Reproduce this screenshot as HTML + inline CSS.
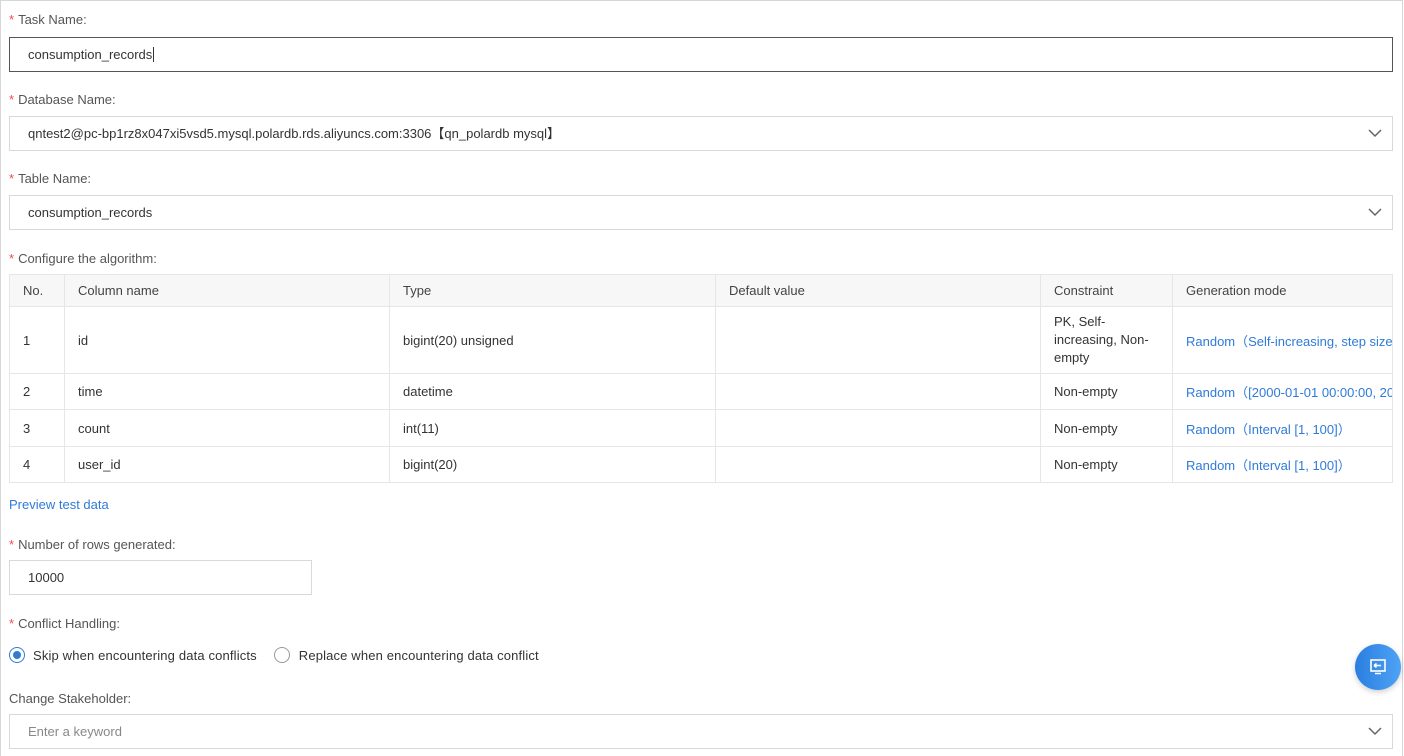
<!DOCTYPE html>
<html><head><style>
*{box-sizing:border-box;margin:0;padding:0}
body{width:1404px;height:756px;overflow:hidden;background:#fff;font-family:"Liberation Sans",Arial,sans-serif;font-size:13px;color:#333;position:relative}
.frame{position:absolute;left:0;top:0;width:1403px;height:756px;border:1px solid #d6d6d6;border-bottom:none}
.lbl{position:absolute;left:9px;color:#555;font-size:13px}
.lbl i{color:#f04c4c;font-style:normal;margin-right:4px}
.box{position:absolute;left:9px;width:1384px;height:35px;border:1px solid #d9d9d9;padding-left:18px;line-height:33px;color:#333}
.chev{position:absolute;right:10px;top:11px}
table{position:absolute;left:9px;top:274px;width:1384px;border-collapse:collapse;table-layout:fixed}
td,th{border:1px solid #e6e6e6;padding:0 13px;text-align:left;font-weight:normal;white-space:nowrap;overflow:hidden}
th{background:#f7f7f7;height:32px;color:#444}
td{color:#333}
.b{color:#2f7bd9}
</style></head><body>
<div class="frame"></div>
<div class="lbl" style="top:12px"><i>*</i>Task Name:</div>
<div class="box" style="top:37px;border-color:#555">consumption_records<span style="border-left:1px solid #333;margin-left:1px"></span></div>
<div class="lbl" style="top:92px"><i>*</i>Database Name:</div>
<div class="box" style="top:116px">qntest2@pc-bp1rz8x047xi5vsd5.mysql.polardb.rds.aliyuncs.com:3306【qn_polardb mysql】<svg class="chev" width="14" height="10" viewBox="0 0 14 10"><path d="M1 2l6 6 6-6" fill="none" stroke="#666" stroke-width="1.5"/></svg></div>
<div class="lbl" style="top:171px"><i>*</i>Table Name:</div>
<div class="box" style="top:195px">consumption_records<svg class="chev" width="14" height="10" viewBox="0 0 14 10"><path d="M1 2l6 6 6-6" fill="none" stroke="#666" stroke-width="1.5"/></svg></div>
<div class="lbl" style="top:251px"><i>*</i>Configure the algorithm:</div>
<table>
<colgroup><col style="width:55px"><col style="width:325px"><col style="width:326px"><col style="width:325px"><col style="width:132px"><col></colgroup>
<tr><th>No.</th><th>Column name</th><th>Type</th><th>Default value</th><th>Constraint</th><th>Generation mode</th></tr>
<tr style="height:67px"><td>1</td><td>id</td><td>bigint(20) unsigned</td><td></td><td style="white-space:normal;line-height:18px">PK, Self-increasing, Non-empty</td><td class="b">Random（Self-increasing, step size 1）</td></tr>
<tr style="height:36px"><td>2</td><td>time</td><td>datetime</td><td></td><td>Non-empty</td><td class="b">Random（[2000-01-01 00:00:00, 2020-01-01 00:00:00]）</td></tr>
<tr style="height:37px"><td>3</td><td>count</td><td>int(11)</td><td></td><td>Non-empty</td><td class="b">Random（Interval [1, 100]）</td></tr>
<tr style="height:36px"><td>4</td><td>user_id</td><td>bigint(20)</td><td></td><td>Non-empty</td><td class="b">Random（Interval [1, 100]）</td></tr>
</table>
<div class="b" style="position:absolute;left:9px;top:497px">Preview test data</div>
<div class="lbl" style="top:537px"><i>*</i>Number of rows generated:</div>
<div class="box" style="top:560px;width:303px">10000</div>
<div class="lbl" style="top:616px"><i>*</i>Conflict Handling:</div>
<div style="position:absolute;left:9px;top:647px;display:flex;align-items:center;color:#333;letter-spacing:0.15px">
<span style="width:16px;height:16px;border-radius:50%;border:1px solid #2f7bd9;display:inline-flex;align-items:center;justify-content:center;margin-right:8px"><span style="width:8px;height:8px;border-radius:50%;background:#2f7bd9"></span></span>Skip when encountering data conflicts
<span style="width:16px;height:16px;border-radius:50%;border:1px solid #999;display:inline-block;margin:0 9px 0 17px"></span>Replace when encountering data conflict</div>
<div class="lbl" style="top:691px">Change Stakeholder:</div>
<div class="box" style="top:714px;color:#888">Enter a keyword<svg class="chev" width="14" height="10" viewBox="0 0 14 10"><path d="M1 2l6 6 6-6" fill="none" stroke="#666" stroke-width="1.5"/></svg></div>
<div style="position:absolute;left:1355px;top:644px;width:46px;height:46px;border-radius:50%;background:linear-gradient(90deg,#2a7ee0,#4ea3f5);box-shadow:0 2px 6px rgba(0,0,0,.2)">
<svg width="46" height="46" viewBox="0 0 46 46"><rect x="16" y="16" width="14" height="11" fill="none" stroke="#fff" stroke-width="1.6"/><path d="M19 21.5h7M19 21.5l2.5-2M19 21.5l2.5 2M20 29.5h6" stroke="#fff" stroke-width="1.5" fill="none"/></svg></div>
</body></html>
